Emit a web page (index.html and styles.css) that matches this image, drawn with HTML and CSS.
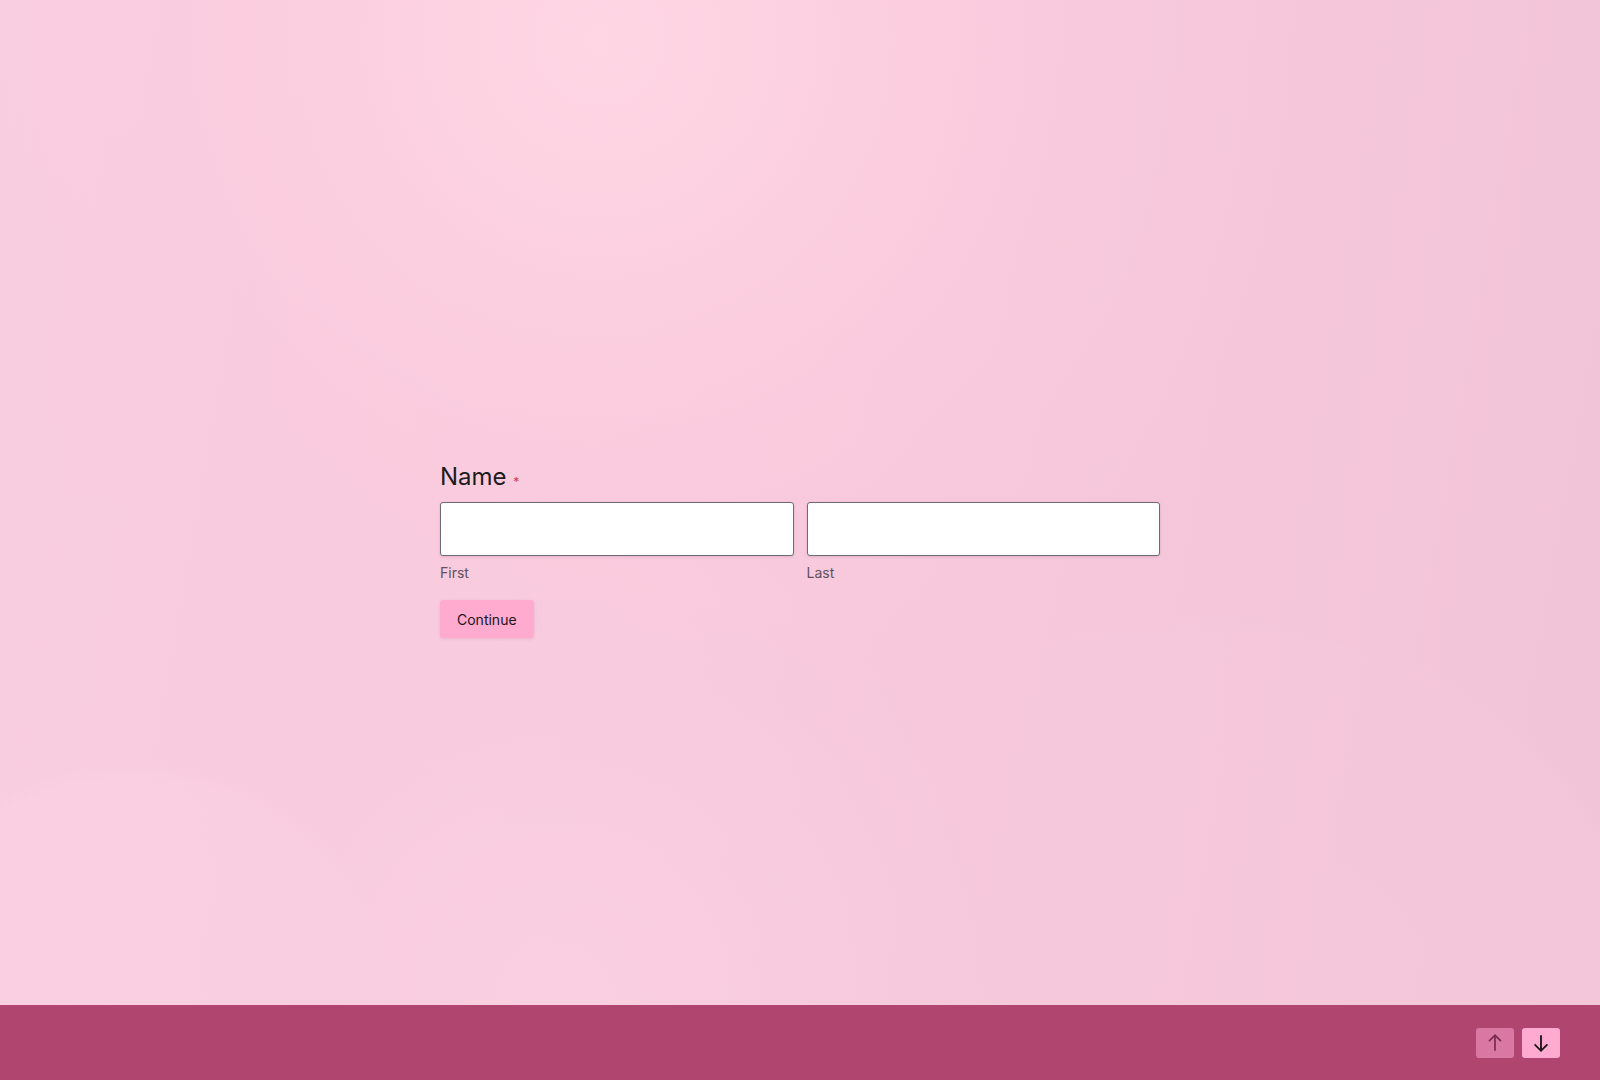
FILE: index.html
```html
<!DOCTYPE html>
<html lang="en">
<head>
<meta charset="utf-8">
<title>Name</title>
<link rel="stylesheet" href="styles.css">
</head>
<body>
<div class="page">
  <main class="stage">
    <form class="question">
      <div class="q-title">Name <span class="req">*</span></div>
      <div class="fields">
        <label class="field">
          <input class="text-input" type="text">
          <span class="sublabel">First</span>
        </label>
        <label class="field">
          <input class="text-input" type="text">
          <span class="sublabel">Last</span>
        </label>
      </div>
      <button type="button" class="continue">Continue</button>
    </form>
  </main>
  <footer class="footer">
    <div class="nav">
      <button type="button" class="nav-btn nav-up" aria-label="Previous">
        <svg viewBox="0 0 24 24" width="22" height="22"><path d="M12 20.5V3.5M5.5 10 12 3.5 18.5 10" fill="none" stroke="currentColor" stroke-width="1.9"/></svg>
      </button>
      <button type="button" class="nav-btn nav-down" aria-label="Next">
        <svg viewBox="0 0 24 24" width="22" height="22"><path d="M12 3.5v17M5 13.5l7 7 7-7" fill="none" stroke="currentColor" stroke-width="2"/></svg>
      </button>
    </div>
  </footer>
</div>
</body>
</html>
```

FILE: styles.css
```css
html, body {
  margin: 0;
  padding: 0;
}
body {
  font-family: Inter, "Noto Sans", sans-serif;
  color: #1c1a1c;
}
.page {
  width: 1600px;
  height: 1080px;
  display: flex;
  flex-direction: column;
  background-color: #f7c9dc;
  background-image:
    radial-gradient(circle at 600px 40px, #fed6e4 0px, #fdd3e2 130px, #fccfe0 260px, rgba(250,204,222,0.6) 420px, rgba(248,202,221,0) 700px),
    radial-gradient(circle at 560px 1000px, rgba(251,208,226,0.9) 0px, rgba(249,205,224,0.6) 250px, rgba(248,202,221,0) 480px),
    radial-gradient(circle at 130px 1040px, rgba(251,210,227,0.7) 0px, rgba(251,210,227,0.5) 260px, rgba(251,210,227,0) 280px),
    radial-gradient(circle at 1200px 1100px, rgba(246,200,219,0.6) 0px, rgba(246,200,219,0.45) 470px, rgba(246,200,219,0) 490px),
    linear-gradient(100deg, #f9cde0 0%, #f8c9dc 45%, #f2c4d8 100%);
}
.stage {
  flex: 1;
  display: flex;
  justify-content: center;
  padding-top: 461px;
  box-sizing: border-box;
}
.question {
  width: 720px;
  display: flex;
  flex-direction: column;
  align-items: flex-start;
}
.q-title {
  font-size: 24px;
  line-height: 32px;
  font-weight: 400;
  color: #1d1b1e;
}
.req {
  color: #d33a3a;
  font-size: 12px;
  line-height: 1;
  vertical-align: -1px;
  margin-left: 0;
}
.fields {
  margin-top: 9px;
  width: 100%;
  display: grid;
  grid-template-columns: 1fr 1fr;
  gap: 13px;
}
.field {
  display: flex;
  flex-direction: column;
}
.text-input {
  height: 54px;
  box-sizing: border-box;
  margin: 0;
  border: 1px solid #6d6a72;
  border-radius: 3px;
  background: #ffffff;
  box-shadow: 0 1px 3px rgba(120, 60, 90, 0.18);
  font: inherit;
  outline: none;
}
.sublabel {
  margin-top: 7px;
  font-size: 14px;
  line-height: 20px;
  color: #5f525b;
}
.continue {
  margin-top: 17px;
  height: 38px;
  padding: 0 17px;
  border: none;
  border-radius: 3px;
  background: #ffaacf;
  color: #1a161a;
  font-family: Inter, "Noto Sans", sans-serif;
  font-size: 14px;
  font-weight: 400;
  box-shadow: 0 1px 3px rgba(150, 60, 100, 0.15);
  cursor: pointer;
}
.footer {
  height: 75px;
  background: #b0456f;
  display: flex;
  justify-content: flex-end;
  align-items: flex-end;
  padding: 0 40px 22px 0;
  box-sizing: border-box;
}
.nav {
  display: flex;
  gap: 8px;
}
.nav-btn {
  width: 38px;
  height: 30px;
  padding: 0;
  border: none;
  border-radius: 3px;
  display: flex;
  align-items: center;
  justify-content: center;
  cursor: pointer;
}
.nav-up {
  background: #d878a3;
  color: #7a2b52;
}
.nav-down {
  background: #ffaad0;
  color: #1a1418;
}
```
